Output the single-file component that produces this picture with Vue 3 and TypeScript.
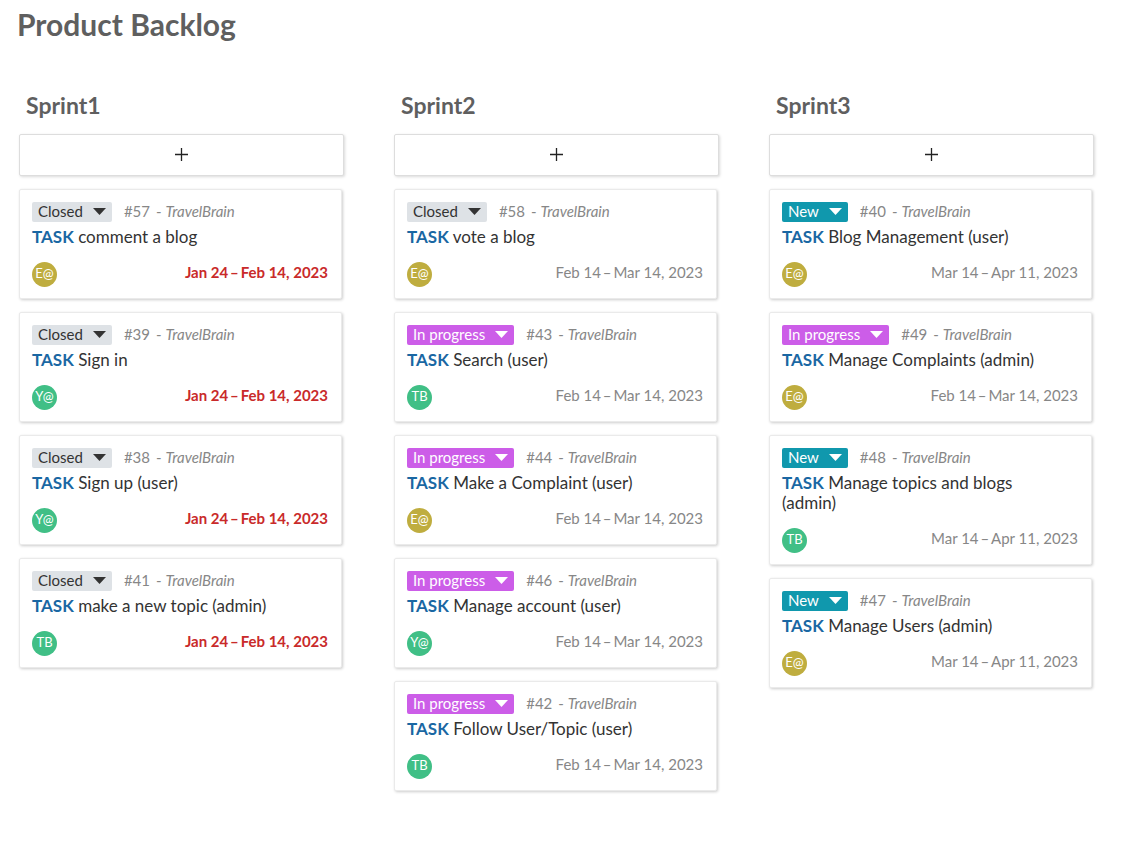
<script setup lang="ts">
type Status = 'Closed' | 'In progress' | 'New'

interface Card {
  id: number
  status: Status
  subject: string
  assignee: string
  dates: string
  overdue?: boolean
}

interface Sprint {
  name: string
  cards: Card[]
}

const project = 'TravelBrain'

// Date ranges are set with thin spaces around the dash.
const JAN = 'Jan 24\u2009–\u2009Feb 14, 2023'
const FEB = 'Feb 14\u2009–\u2009Mar 14, 2023'
const MAR = 'Mar 14\u2009–\u2009Apr 11, 2023'

const sprints: Sprint[] = [
  {
    name: 'Sprint1',
    cards: [
      { id: 57, status: 'Closed', subject: 'comment a blog', assignee: 'E@', dates: JAN, overdue: true },
      { id: 39, status: 'Closed', subject: 'Sign in', assignee: 'Y@', dates: JAN, overdue: true },
      { id: 38, status: 'Closed', subject: 'Sign up (user)', assignee: 'Y@', dates: JAN, overdue: true },
      { id: 41, status: 'Closed', subject: 'make a new topic (admin)', assignee: 'TB', dates: JAN, overdue: true },
    ],
  },
  {
    name: 'Sprint2',
    cards: [
      { id: 58, status: 'Closed', subject: 'vote a blog', assignee: 'E@', dates: FEB },
      { id: 43, status: 'In progress', subject: 'Search (user)', assignee: 'TB', dates: FEB },
      { id: 44, status: 'In progress', subject: 'Make a Complaint (user)', assignee: 'E@', dates: FEB },
      { id: 46, status: 'In progress', subject: 'Manage account (user)', assignee: 'Y@', dates: FEB },
      { id: 42, status: 'In progress', subject: 'Follow User/Topic (user)', assignee: 'TB', dates: FEB },
    ],
  },
  {
    name: 'Sprint3',
    cards: [
      { id: 40, status: 'New', subject: 'Blog Management (user)', assignee: 'E@', dates: MAR },
      { id: 49, status: 'In progress', subject: 'Manage Complaints (admin)', assignee: 'E@', dates: FEB },
      { id: 48, status: 'New', subject: 'Manage topics and blogs (admin)', assignee: 'TB', dates: MAR },
      { id: 47, status: 'New', subject: 'Manage Users (admin)', assignee: 'E@', dates: MAR },
    ],
  },
]

const statusClass: Record<Status, string> = {
  Closed: 'status-closed',
  'In progress': 'status-progress',
  New: 'status-new',
}
</script>

<template>
  <main class="board">
    <h1 class="board-title">Product Backlog</h1>
    <div class="columns">
      <section v-for="sprint in sprints" :key="sprint.name" class="column">
        <h2 class="column-title">{{ sprint.name }}</h2>
        <button type="button" class="add" :aria-label="`Add card to ${sprint.name}`">
          <svg width="13" height="13" viewBox="0 0 13 13" aria-hidden="true">
            <path d="M6.5 0V13M0 6.5H13" fill="none" stroke="#222" stroke-width="1.3" />
          </svg>
        </button>
        <article v-for="card in sprint.cards" :key="card.id" class="card">
          <div class="card-head">
            <button type="button" class="status" :class="statusClass[card.status]">
              {{ card.status }}
              <svg class="caret" width="13" height="7" viewBox="0 0 13 7" aria-hidden="true">
                <path d="M0 0H13L6.5 7Z" fill="currentColor" />
              </svg>
            </button>
            <a class="card-id" href="#">#{{ card.id }}</a>
            <span class="project">- <em>{{ project }}</em></span>
          </div>
          <p class="subject"><strong class="type">TASK</strong> {{ card.subject }}</p>
          <div class="card-foot">
            <span class="avatar" :class="card.assignee === 'E@' ? 'avatar-olive' : 'avatar-green'">{{ card.assignee }}</span>
            <span class="dates" :class="{ overdue: card.overdue }">{{ card.dates }}</span>
          </div>
        </article>
      </section>
    </div>
  </main>
</template>

<style>
body {
  background: #fff;
}
</style>

<style scoped>
.board {
  padding: 6px 39px 40px 17px;
  font-family: Lato, "Liberation Sans", sans-serif;
  color: #333;
}

.board-title {
  margin: 0 0 49px;
  font-size: 30px;
  line-height: 36px;
  font-weight: 700;
  color: #5f5f5f;
}

.columns {
  display: grid;
  grid-template-columns: repeat(3, minmax(0, 1fr));
  gap: 50px;
  align-items: start;
  padding-left: 2px;
}

.column {
  display: flex;
  flex-direction: column;
  gap: 13px;
}

.column-title {
  margin: 0 7px 2px;
  font-size: 23px;
  line-height: 28px;
  font-weight: 700;
  color: #5f5f5f;
}

.add {
  display: flex;
  align-items: center;
  justify-content: center;
  height: 42px;
  padding: 0 0 1px;
  border: 1px solid #ddd;
  border-radius: 2px;
  background: #fff;
  box-shadow: 1px 1px 3px rgba(0, 0, 0, 0.15);
}

.card {
  margin-right: 2px;
  padding: 12px 13px 12px 12px;
  border: 1px solid #eaeaea;
  border-radius: 2px;
  background: #fff;
  box-shadow: 1px 1px 3px rgba(0, 0, 0, 0.2);
}

.card-head {
  display: flex;
  height: 20px;
  font-size: 15px;
  line-height: 18px;
  color: #878787;
}

.status {
  display: flex;
  align-items: flex-start;
  gap: 10px;
  height: 20px;
  margin-right: 12px;
  padding: 0 6px;
  border: 0;
  border-radius: 2px;
  font: inherit;
}

.caret {
  margin-top: 6px;
}

.status-closed {
  background: #dee2e6;
  color: #333;
}

.status-progress {
  background: #cc5de8;
  color: #fff;
}

.status-new {
  background: #1098ad;
  color: #fff;
}

.card-id {
  margin-right: 6px;
  color: inherit;
  text-decoration: none;
}

.subject {
  margin: 5px 0 15px;
  padding-right: 12px;
  font-size: 17px;
  line-height: 20px;
}

.type {
  color: #1a67a3;
}

.card-foot {
  display: flex;
  align-items: flex-start;
  justify-content: space-between;
  height: 24px;
}

.avatar {
  width: 25px;
  height: 25px;
  border-radius: 50%;
  font-size: 13px;
  line-height: 23px;
  text-align: center;
  color: #fff;
}

.avatar-olive {
  background: #bfad3f;
}

.avatar-green {
  background: #40bf86;
}

.dates {
  font-size: 15px;
  line-height: 20px;
  color: #878787;
}

.overdue {
  font-weight: 700;
  color: #c92a2a;
}
</style>
